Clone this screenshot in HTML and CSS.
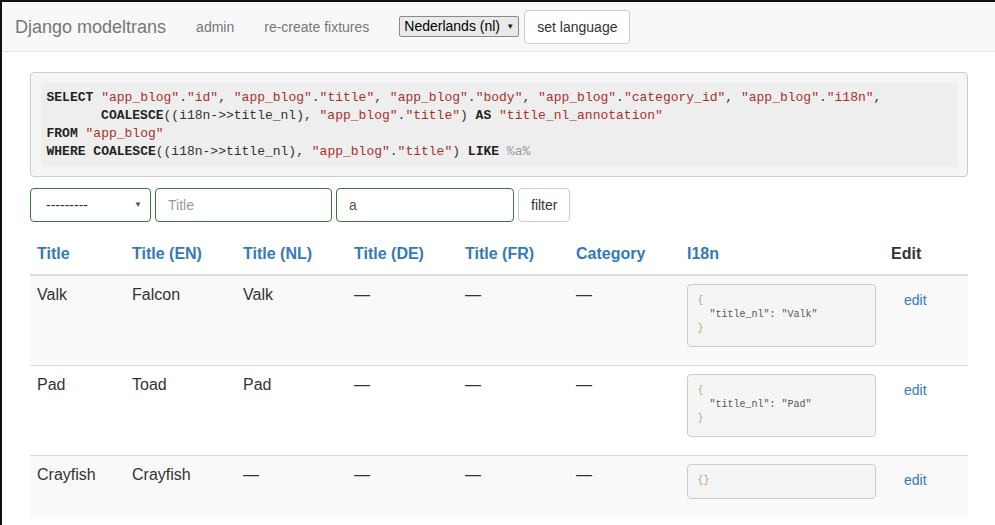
FILE: index.html
```html
<!DOCTYPE html>
<html lang="nl">
<head>
<meta charset="utf-8">
<title>Django modeltrans</title>
<link rel="stylesheet" href="styles.css">
</head>
<body>
<div class="frame">
  <nav class="navbar">
    <a class="brand" href="#">Django modeltrans</a>
    <a class="nav-link" href="#">admin</a>
    <a class="nav-link" href="#">re-create fixtures</a>
    <form class="nav-form">
      <div class="lang-select"><span>Nederlands (nl)</span><span class="lang-caret">▼</span></div>
      <button class="btn" type="button">set language</button>
    </form>
  </nav>

  <main class="container">
    <pre class="sql"><div class="highlight"><b>SELECT</b> <s>"app_blog"</s>.<s>"id"</s>, <s>"app_blog"</s>.<s>"title"</s>, <s>"app_blog"</s>.<s>"body"</s>, <s>"app_blog"</s>.<s>"category_id"</s>, <s>"app_blog"</s>.<s>"i18n"</s>,
       <b>COALESCE</b>((i18n-&gt;&gt;title_nl), <s>"app_blog"</s>.<s>"title"</s>) <b>AS</b> <s>"title_nl_annotation"</s>
<b>FROM</b> <s>"app_blog"</s>
<b>WHERE</b> <b>COALESCE</b>((i18n-&gt;&gt;title_nl), <s>"app_blog"</s>.<s>"title"</s>) <b>LIKE</b> <i>%a%</i></div></pre>

    <form class="filter">
      <div class="control select-control"><span>---------</span><span class="caret">▼</span></div>
      <div class="control input-title placeholder">Title</div>
      <div class="control input-search">a</div>
      <button class="btn btn-filter" type="button">filter</button>
    </form>

    <table class="table">
      <colgroup>
        <col class="c-title"><col class="c-lang"><col class="c-lang"><col class="c-lang"><col class="c-lang"><col class="c-lang"><col class="c-i18n"><col class="c-edit">
      </colgroup>
      <thead>
        <tr>
          <th><a href="#">Title</a></th>
          <th><a href="#">Title (EN)</a></th>
          <th><a href="#">Title (NL)</a></th>
          <th><a href="#">Title (DE)</a></th>
          <th><a href="#">Title (FR)</a></th>
          <th><a href="#">Category</a></th>
          <th><a href="#">I18n</a></th>
          <th>Edit</th>
        </tr>
      </thead>
      <tbody>
        <tr class="odd">
          <td>Valk</td>
          <td>Falcon</td>
          <td>Valk</td>
          <td>—</td>
          <td>—</td>
          <td>—</td>
          <td><pre class="json"><span class="br">{</span>
  <span class="k">"title_nl"</span>: <span class="v">"Valk"</span>
<span class="br">}</span></pre></td>
          <td><a class="btn-link" href="#">edit</a></td>
        </tr>
        <tr>
          <td>Pad</td>
          <td>Toad</td>
          <td>Pad</td>
          <td>—</td>
          <td>—</td>
          <td>—</td>
          <td><pre class="json"><span class="br">{</span>
  <span class="k">"title_nl"</span>: <span class="v">"Pad"</span>
<span class="br">}</span></pre></td>
          <td><a class="btn-link" href="#">edit</a></td>
        </tr>
        <tr class="odd">
          <td>Crayfish</td>
          <td>Crayfish</td>
          <td>—</td>
          <td>—</td>
          <td>—</td>
          <td>—</td>
          <td><pre class="json"><span class="br">{}</span></pre></td>
          <td><a class="btn-link" href="#">edit</a></td>
        </tr>
      </tbody>
    </table>
  </main>
</div>
</body>
</html>
```

FILE: styles.css
```css
* { box-sizing: border-box; }

html, body {
  margin: 0;
  padding: 0;
  background: #fff;
}

body {
  font-family: "Liberation Sans", Arial, Helvetica, sans-serif;
  font-size: 16px;
  line-height: 1.42857;
  color: #333;
}

a { text-decoration: none; color: #337ab7; }

.frame {
  border-top: 2px solid #111;
  border-left: 2px solid #111;
  min-height: 100vh;
}

/* navbar */
.navbar {
  display: flex;
  align-items: center;
  height: 50px;
  background: #f8f8f8;
  border-bottom: 1px solid #e7e7e7;
  margin-bottom: 20px;
}

.brand {
  padding: 0 15px 0 13px;
  font-size: 18px;
  line-height: 20px;
  color: #777;
}

.nav-link {
  padding: 0 15px;
  font-size: 14px;
  line-height: 20px;
  color: #777;
}

.nav-form {
  display: flex;
  align-items: center;
  gap: 5px;
  margin: 0 0 0 15px;
}

.lang-select {
  display: flex;
  align-items: center;
  justify-content: space-between;
  width: 120px;
  height: 21px;
  padding: 0 4px 0 4px;
  background: #e9e9e9;
  border: 1px solid #8a8a8a;
  border-radius: 2px;
  font-size: 14px;
  color: #000;
}

.lang-caret {
  font-size: 8px;
  color: #222;
}

.btn {
  display: inline-block;
  padding: 6px 12px;
  font-family: inherit;
  font-size: 14px;
  line-height: 20px;
  color: #333;
  background: #fff;
  border: 1px solid #ccc;
  border-radius: 4px;
}

/* main */
.container {
  width: 938px;
  margin-left: 28px;
}

.sql {
  margin: 0 0 11px;
  padding: 9.5px;
  background: #f5f5f5;
  border: 1px solid #ccc;
  border-radius: 4px;
}

.highlight {
  background: #eeeeee;
  padding: 6px;
  font-family: "Liberation Mono", "Courier New", monospace;
  font-size: 13px;
  line-height: 18px;
  color: #333;
  white-space: pre;
}

.highlight b { font-weight: bold; color: #222; }
.highlight s { text-decoration: none; color: #a8322d; }
.highlight i { font-style: normal; color: #999; }

/* filter form */
.filter {
  display: flex;
  gap: 4px;
  margin-bottom: 13px;
}

.control {
  display: flex;
  align-items: center;
  height: 34px;
  padding: 6px 12px;
  font-size: 14px;
  line-height: 20px;
  color: #555;
  background: #fff;
  border: 1px solid #3c763d;
  border-radius: 4px;
}

.select-control {
  width: 121px;
  justify-content: space-between;
  padding: 6px 8px 6px 15px;
  color: #333;
}

.caret {
  font-size: 8px;
  color: #555;
}

.input-title { width: 177px; }
.input-search { width: 178px; }
.placeholder { color: #999; }

.btn-filter { height: 34px; }

/* table */
.table {
  width: 938px;
  border-collapse: collapse;
  table-layout: fixed;
}

.c-title { width: 95px; }
.c-lang { width: 111px; }
.c-i18n { width: 204px; }
.c-edit { width: 84px; }

.table th {
  text-align: left;
  padding: 8px 8px 8px 7px;
  font-weight: bold;
  border-bottom: 2px solid #ddd;
  vertical-align: bottom;
}

.table td {
  padding: 8px 8px 8px 7px;
  vertical-align: top;
  border-top: 1px solid #ddd;
}

.table tbody tr.odd { background: #f9f9f9; }

.json {
  margin: 0 0 10px;
  padding: 9.5px 9.5px;
  background: #f5f5f5;
  border: 1px solid #ccc;
  border-radius: 4px;
  font-family: "Liberation Mono", "Courier New", monospace;
  font-size: 10px;
  line-height: 14px;
  color: #444;
}

.json .br { color: #c9a26b; }
.json .k { color: #555; }
.json .v { color: #555; }

.btn-link {
  display: inline-block;
  padding: 6px 12px 6px 13px;
  font-size: 14px;
  line-height: 20px;
  color: #337ab7;
}
```
